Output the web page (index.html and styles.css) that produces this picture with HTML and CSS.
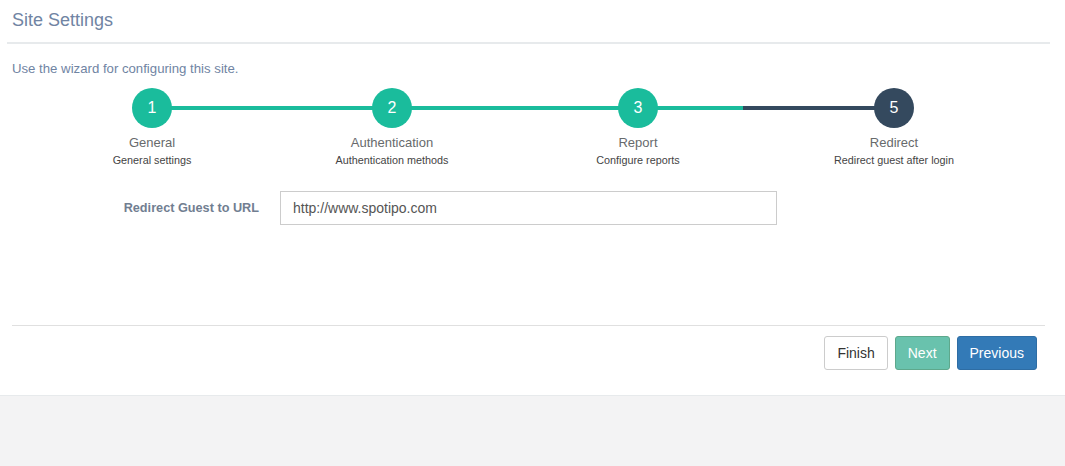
FILE: index.html
```html
<!DOCTYPE html>
<html>
<head>
<meta charset="utf-8">
<link rel="stylesheet" href="styles.css">
</head>
<body>
<div class="panel">
  <div class="panel-head">
    <h5 class="panel-title">Site Settings</h5>
  </div>
  <div class="panel-body">
    <p class="intro">Use the wizard for configuring this site.</p>
    <div class="wizard">
      <div class="track"></div>
      <div class="step">
        <div class="dot done">1</div>
        <div class="step-title">General</div>
        <div class="step-sub">General settings</div>
      </div>
      <div class="step">
        <div class="dot done">2</div>
        <div class="step-title">Authentication</div>
        <div class="step-sub">Authentication methods</div>
      </div>
      <div class="step">
        <div class="dot done">3</div>
        <div class="step-title">Report</div>
        <div class="step-sub">Configure reports</div>
      </div>
      <div class="step">
        <div class="dot current">5</div>
        <div class="step-title">Redirect</div>
        <div class="step-sub">Redirect guest after login</div>
      </div>
    </div>
    <div class="form-row">
      <label class="form-label" for="url">Redirect Guest to URL</label>
      <input class="form-input" id="url" type="text" value="http://www.spotipo.com">
    </div>
    <div class="actions">
      <button class="btn btn-default">Finish</button>
      <button class="btn btn-next">Next</button>
      <button class="btn btn-primary">Previous</button>
    </div>
  </div>
</div>
</body>
</html>
```
FILE: styles.css
```css
* { box-sizing: border-box; }
html, body { margin: 0; padding: 0; }
body {
  background: #f3f3f4;
  font-family: "Liberation Sans", Arial, sans-serif;
  width: 1065px;
  height: 466px;
  overflow: hidden;
}
.panel {
  background: #fff;
  border-bottom: 1px solid #e7eaec;
  height: 396px;
}
.panel-head {
  margin: 0 15px 0 7px;
  padding: 10px 0 12px 5px;
  border-bottom: 2px solid #e7eaec;
}
.panel-title {
  margin: 0;
  font-size: 18px;
  line-height: 20px;
  font-weight: normal;
  color: #7084a3;
}
.panel-body {
  padding: 0 20px 0 12px;
}
.intro {
  margin: 16px 0 0 0;
  font-size: 13.2px;
  line-height: 18px;
  color: #7084a3;
}
.wizard {
  position: relative;
  margin-top: 10px;
  padding-left: 20px;
  display: grid;
  grid-template-columns: 240px 240px 252px 260px;
}
.track {
  position: absolute;
  left: 140px;
  top: 18px;
  width: 742px;
  height: 4px;
  background: linear-gradient(to right, #1abc9c 0, #1abc9c 591px, #34495e 591px, #34495e 100%);
}
.step {
  position: relative;
  display: flex;
  flex-direction: column;
  align-items: center;
}
.dot {
  width: 40px;
  height: 40px;
  border-radius: 50%;
  color: #fff;
  font-size: 16px;
  line-height: 40px;
  text-align: center;
}
.dot.done { background: #1abc9c; }
.dot.current { background: #34495e; }
.step-title {
  margin-top: 5px;
  font-size: 13px;
  line-height: 20px;
  color: #676a6c;
}
.step-sub {
  margin-top: 0;
  font-size: 10.8px;
  line-height: 15px;
  color: #444;
}
.form-row {
  display: flex;
  align-items: center;
  margin-top: 23px;
}
.form-label {
  width: 247px;
  text-align: right;
  font-size: 12.7px;
  font-weight: bold;
  color: #717e91;
  margin-right: 21px;
}
.form-input {
  width: 497px;
  height: 34px;
  padding: 6px 12px;
  border: 1px solid #ccc;
  border-radius: 0;
  font-family: "Liberation Sans", Arial, sans-serif;
  font-size: 14px;
  color: #555;
  outline: none;
}
.actions {
  margin-top: 100px;
  border-top: 1px solid #e0e0e0;
  padding: 10px 8px 0 0;
  display: flex;
  justify-content: flex-end;
  gap: 7px;
}
.btn {
  height: 34px;
  padding: 6px 12px;
  font-family: "Liberation Sans", Arial, sans-serif;
  font-size: 14px;
  line-height: 20px;
  border-radius: 3px;
  border: 1px solid transparent;
}
.btn-default {
  background: #fff;
  border-color: #ccc;
  color: #333;
}
.btn-next {
  background: #69c2ad;
  border-color: #5ea88c;
  color: #fff;
}
.btn-primary {
  background: #337ab7;
  border-color: #2e6da4;
  color: #fff;
}
```
